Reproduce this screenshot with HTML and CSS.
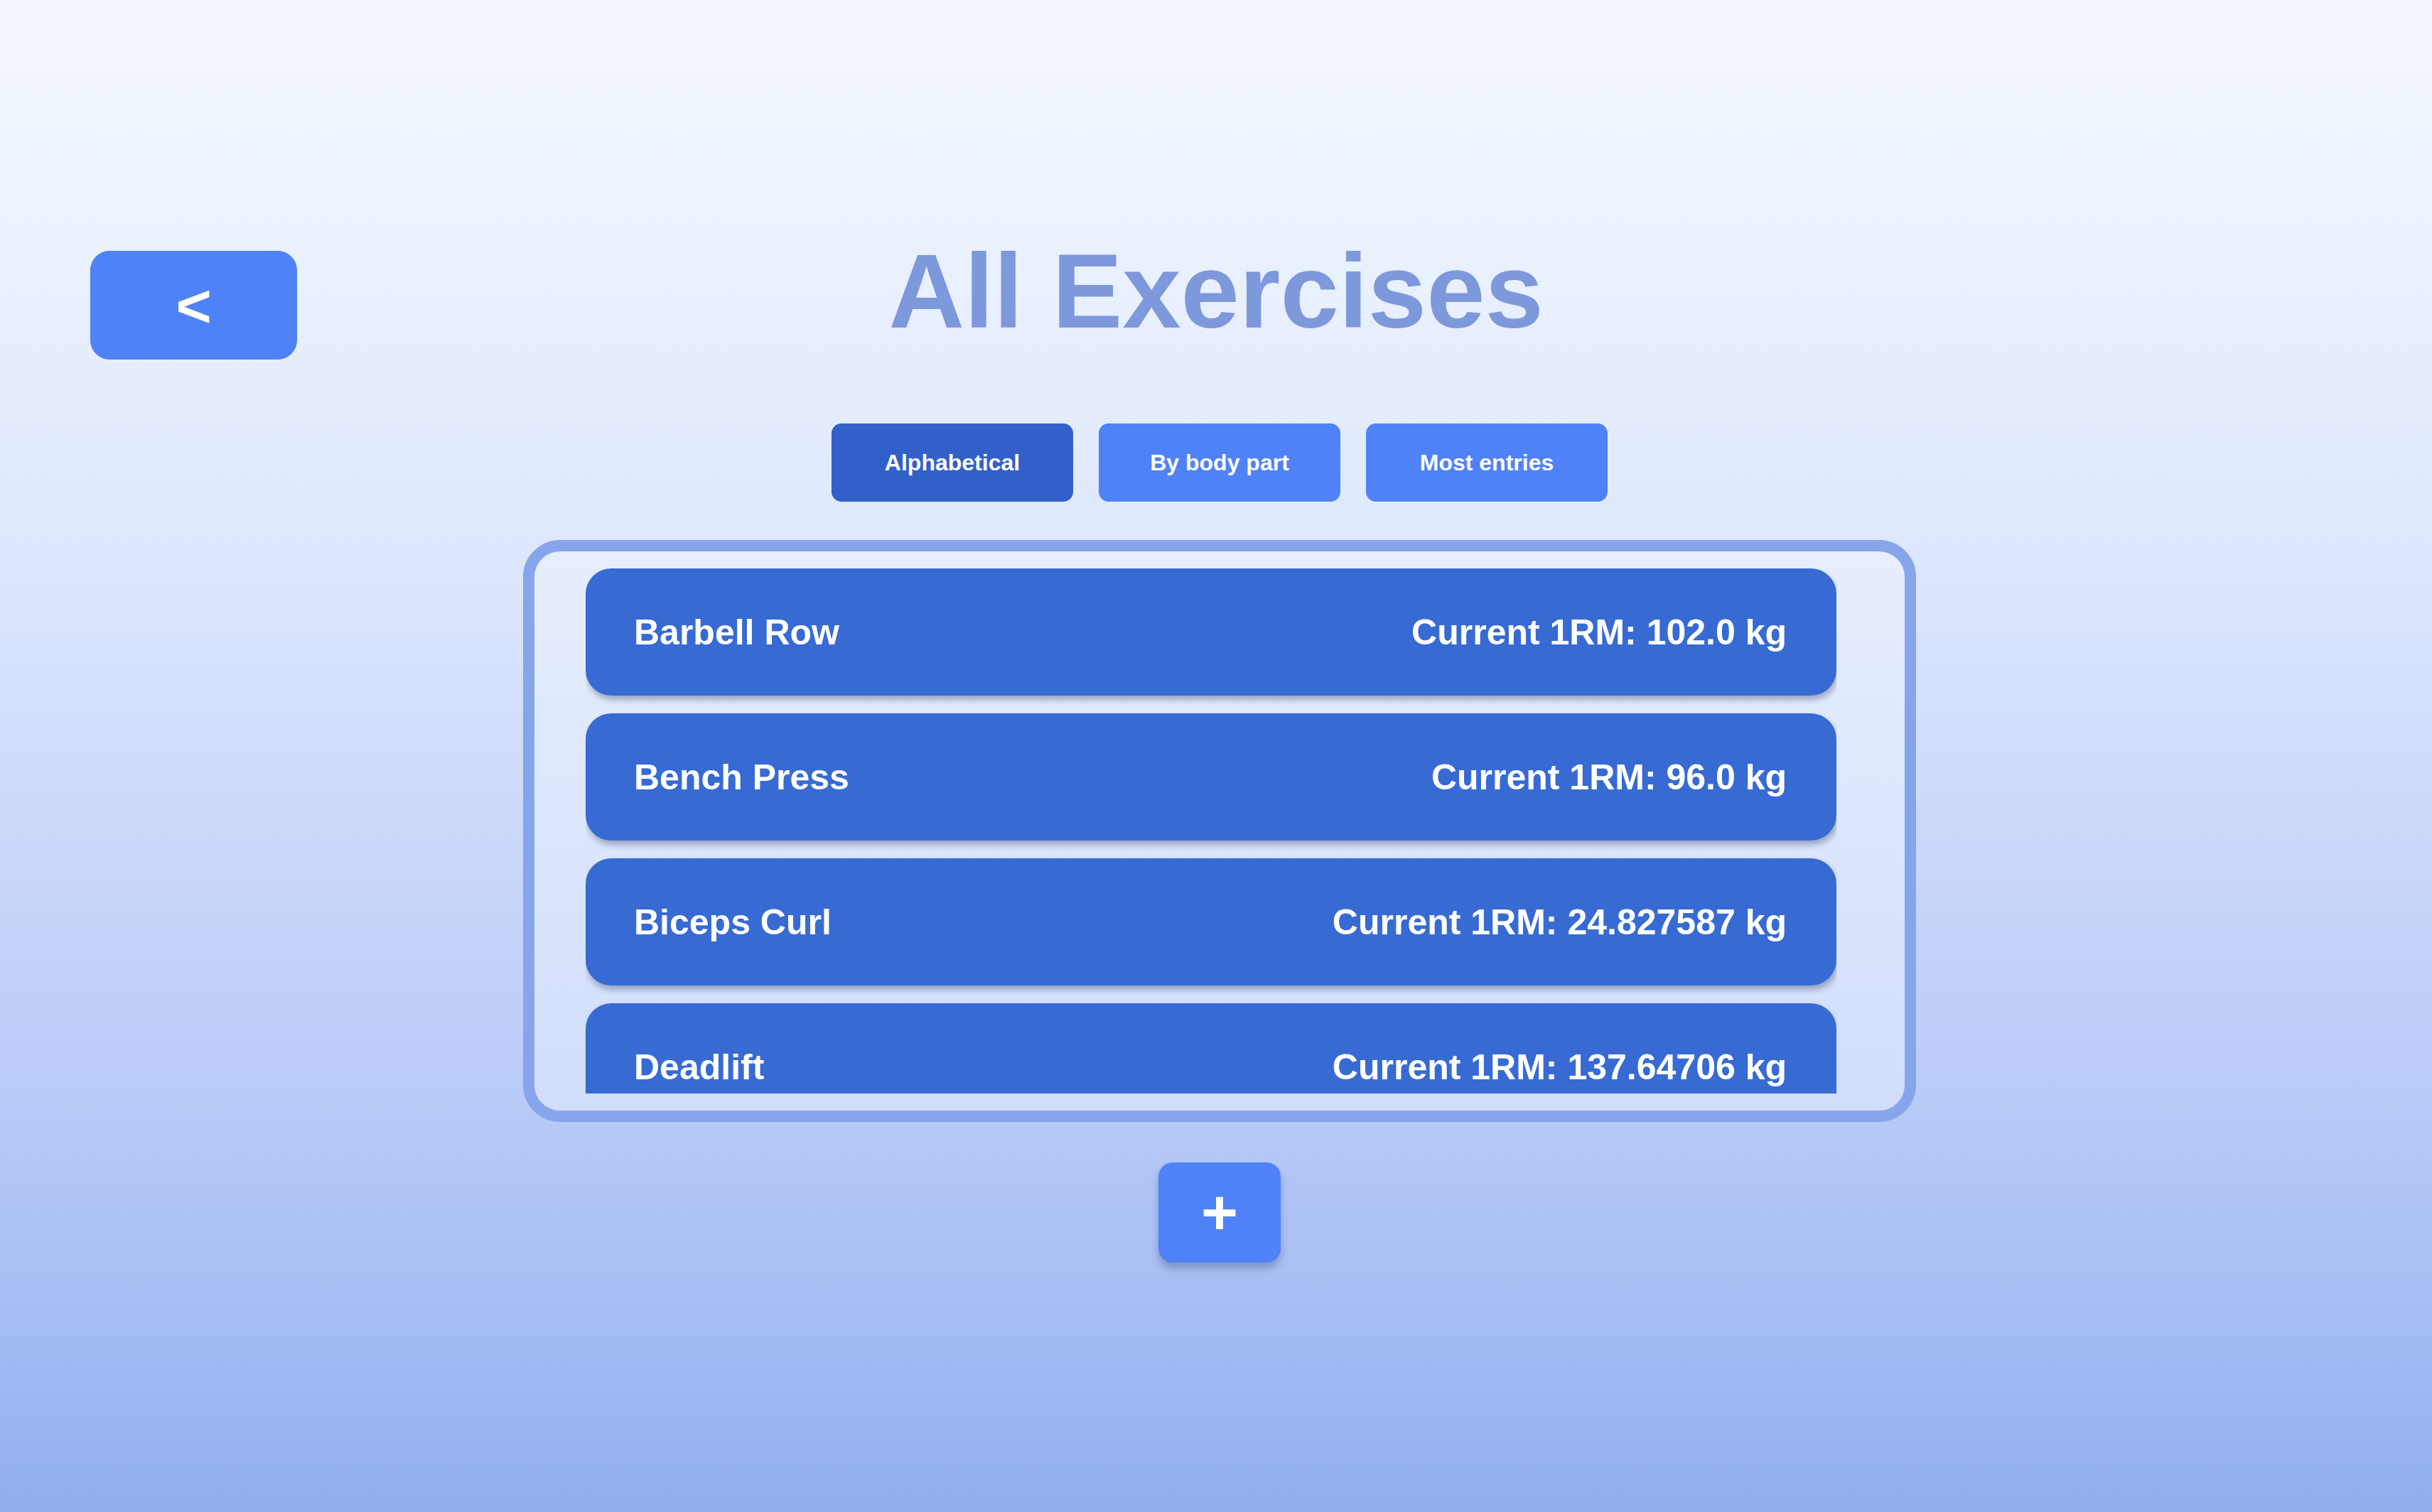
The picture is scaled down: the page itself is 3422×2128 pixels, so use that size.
FILE: index.html
```html
<!DOCTYPE html>
<html lang="en">
<head>
<meta charset="utf-8">
<title>All Exercises</title>
<link rel="stylesheet" href="styles.css">
</head>
<body>
<div class="page">
  <header class="header">
    <button class="back-btn" type="button">&lt;</button>
    <h1 class="title">All Exercises</h1>
    <div class="spacer"></div>
  </header>
  <main class="main">
    <nav class="sort-bar">
      <button class="sort-btn active" type="button">Alphabetical</button>
      <button class="sort-btn" type="button">By body part</button>
      <button class="sort-btn" type="button">Most entries</button>
    </nav>
    <section class="panel">
      <div class="list">
        <div class="row"><span class="row-name">Barbell Row</span><span class="row-value">Current 1RM: 102.0 kg</span></div>
        <div class="row"><span class="row-name">Bench Press</span><span class="row-value">Current 1RM: 96.0 kg</span></div>
        <div class="row"><span class="row-name">Biceps Curl</span><span class="row-value">Current 1RM: 24.827587 kg</span></div>
        <div class="row"><span class="row-name">Deadlift</span><span class="row-value">Current 1RM: 137.64706 kg</span></div>
      </div>
    </section>
    <button class="add-btn" type="button">+</button>
  </main>
</div>
</body>
</html>
```
FILE: styles.css
```css
html, body {
  margin: 0;
  padding: 0;
}
body {
  min-height: 100vh;
  font-family: "Liberation Sans", Arial, sans-serif;
  background: linear-gradient(180deg, #f5f9ff 0%, #eff5fe 9.4%, #dfe8fd 34.8%, #b6c9f7 75.2%, #9fb9f2 90.6%, #90aeed 100%);
  overflow: hidden;
}
.page {
  padding-top: 325px;
}
button {
  font-family: "Liberation Sans", Arial, sans-serif;
  border: none;
  cursor: pointer;
  color: #ffffff;
  font-weight: 700;
  padding: 0;
}
.header {
  display: grid;
  grid-template-columns: 1fr auto 1fr;
  align-items: start;
}
.back-btn {
  justify-self: start;
  margin-top: 28px;
  margin-left: 127px;
  width: 291px;
  height: 153px;
  border-radius: 27px;
  background: #4f82f7;
  font-size: 86px;
  line-height: 1;
  display: flex;
  align-items: center;
  justify-content: center;
}
.title {
  margin: 0;
  font-size: 148px;
  line-height: 169px;
  font-weight: 700;
  color: #7e98dc;
}
.main {
  display: flex;
  flex-direction: column;
  align-items: center;
  padding-left: 10px;
}
.sort-bar {
  margin-top: 90px;
  display: flex;
  gap: 36px;
}
.sort-btn {
  width: 340px;
  height: 110px;
  border-radius: 14px;
  background: #4f82f7;
  font-size: 32px;
}
.sort-btn.active {
  background: #3160c8;
}
.panel {
  margin-top: 54px;
  width: 1960px;
  height: 819px;
  box-sizing: border-box;
  border: 16px solid #87a5eb;
  border-radius: 52px;
  background: linear-gradient(180deg, #e7eefe 0%, #d1ddfa 100%);
  padding: 24px 96px 24px 72px;
}
.list {
  height: 739px;
  overflow: hidden;
  display: flex;
  flex-direction: column;
  gap: 25px;
}
.row {
  flex: 0 0 179px;
  border-radius: 36px;
  background: #376bd3;
  box-shadow: 2px 6px 9px rgba(30, 45, 90, 0.35);
  display: flex;
  align-items: center;
  justify-content: space-between;
  padding: 0 70px 0 68px;
  color: #ffffff;
  font-size: 50px;
  font-weight: 700;
}
.add-btn {
  margin-top: 57px;
  width: 172px;
  height: 141px;
  border-radius: 20px;
  background: #4f82f7;
  box-shadow: 0 8px 12px rgba(30, 45, 100, 0.3);
  font-size: 89px;
  line-height: 1;
  display: flex;
  align-items: center;
  justify-content: center;
}
```
